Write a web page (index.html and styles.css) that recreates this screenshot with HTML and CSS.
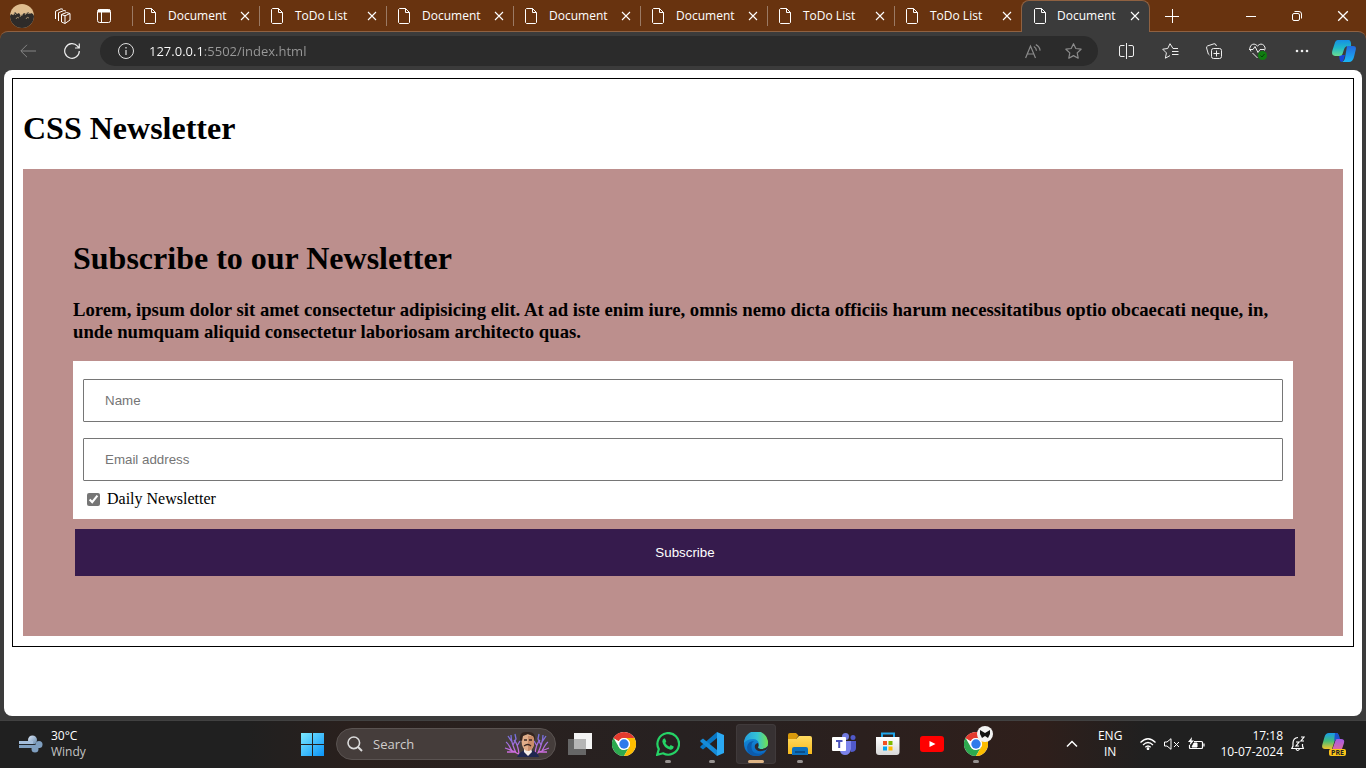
FILE: index.html
```html
<!DOCTYPE html>
<html lang="en">
<head>
<meta charset="utf-8">
<meta name="viewport" content="width=device-width, initial-scale=1">
<title>Document</title>
<link rel="stylesheet" href="styles.css">
</head>
<body>
<svg class="defs" aria-hidden="true">
  <defs>
    <symbol id="file" viewBox="0 0 12 16"><path d="M1.5.5h6l4 4v10l-1 1h-9l-1-1v-13z M7.5.5v4h4" fill="none" stroke="currentColor"/></symbol>
    <symbol id="cross" viewBox="0 0 10 10"><path d="M1 1l8 8M9 1L1 9" fill="none" stroke="currentColor" stroke-width="1.1"/></symbol>
    <symbol id="chrome" viewBox="0 0 24 24">
      <circle cx="12" cy="12" r="12" fill="#fff"/>
      <path d="M12 0a12 12 0 0 1 10.4 6H12a6 6 0 0 0-5.2 3L1.6 6A12 12 0 0 1 12 0z" fill="#e33b2e"/>
      <path d="M6.8 9L1.600 6 4 3.200l4 5z" fill="#e33b2e"/>
      <path d="M1.6 6l5.200 9A6 6 0 0 0 12 18l5.200-3-5.200 9A12 12 0 0 1 1.600 6z" fill="#2da94f"/>
      <path d="M22.4 6A12 12 0 0 1 12 24l5.2-9A6 6 0 0 0 12 6z" fill="#fdbd00"/>
      <circle cx="12" cy="12" r="6" fill="#fff"/><circle cx="12" cy="12" r="4.7" fill="#2f7bea"/>
    </symbol>
    <linearGradient id="win" x1="0" y1="0" x2="1" y2="1"><stop offset="0" stop-color="#7ceaff"/><stop offset="1" stop-color="#0a93f8"/></linearGradient>
    <linearGradient id="cpA" x1="0" y1="0" x2="0" y2="1"><stop offset="0" stop-color="#168fe4"/><stop offset=".5" stop-color="#20b9c8"/><stop offset="1" stop-color="#6bdc91"/></linearGradient>
    <linearGradient id="cpB" x1="0" y1="0" x2="0" y2="1"><stop offset="0" stop-color="#2368df"/><stop offset="1" stop-color="#19b6f4"/></linearGradient>
    <linearGradient id="pvA" x1="0" y1="0" x2="0" y2="1"><stop offset="0" stop-color="#169bea"/><stop offset=".5" stop-color="#44bd78"/><stop offset="1" stop-color="#f2c52b"/></linearGradient>
    <linearGradient id="pvB" x1="0" y1="0" x2="0" y2="1"><stop offset="0" stop-color="#a35ae8"/><stop offset="1" stop-color="#f0708a"/></linearGradient>
    <linearGradient id="edgeA" x1="0" y1="0" x2="1" y2="0"><stop offset="0" stop-color="#249ddd"/><stop offset=".55" stop-color="#34c3d4"/><stop offset="1" stop-color="#72e14f"/></linearGradient>
    <linearGradient id="edgeB" x1="0" y1="0" x2="0" y2="1"><stop offset="0" stop-color="#1993dc"/><stop offset="1" stop-color="#0867c3"/></linearGradient>
    <linearGradient id="folder" x1="0" y1="0" x2="0" y2="1"><stop offset="0" stop-color="#ffdb62"/><stop offset="1" stop-color="#f7b91c"/></linearGradient>
    <linearGradient id="cloud" x1="0" y1="0" x2="1" y2="1"><stop offset="0" stop-color="#dce8f8"/><stop offset="1" stop-color="#6689ac"/></linearGradient>
    <linearGradient id="coral" x1="0" y1="0" x2="0" y2="1"><stop offset="0" stop-color="#6a70dc"/><stop offset="1" stop-color="#e16cdc"/></linearGradient>
    <linearGradient id="bag" x1="0" y1="0" x2="0" y2="1"><stop offset="0" stop-color="#fff"/><stop offset="1" stop-color="#d8d8d8"/></linearGradient>
  </defs>
</svg>

<div class="browser">
  <header class="tabbar">
    <div class="tabbar-tools">
      <button class="icon-btn" aria-label="Profile"><svg width="24" height="24" viewBox="0 0 24 24"><circle cx="12" cy="12" r="12" fill="#dfbd8f"/><path d="M0 12l1-2 2 1 2-3 2 2 2-1 2 3 3-3 2 1 2-2 2 2 1-1 2 1 1 2a12 12 0 0 1-24 0z" fill="#2e2b29"/><path d="M3 11q2-3 3 0M10 13q1-4 3-2M15 11q2-4 4-1M6 15q1-3 3-1M16 15q1-3 3-1" fill="none" stroke="#b9a27f" stroke-width=".8"/></svg></button>
      <button class="icon-btn" aria-label="Workspaces"><svg width="17" height="17" viewBox="0 0 17 17" fill="none" stroke="currentColor" stroke-linejoin="round"><path d="M7.500 6.500l3.500 1.300 5-2.300v6.500l-5 3.500-3.500-1.500zM11 7.800v7.500M7.500 6.500l5-2 3.500 1M4.500 13V4.700L10 2.500l2 .6M1.500 11V3.200L7 .8l2 .5"/></svg></button>
      <button class="icon-btn" aria-label="Tab actions"><svg width="14" height="14" viewBox="0 0 14 14" fill="none" stroke="currentColor"><rect x=".5" y=".5" width="13" height="13" rx="2"/><path d="M1 2h12" stroke-width="3"/><path d="M4.500 3v10"/></svg></button>
    </div>
    <div class="tabs" role="tablist">
      <div class="tab" role="tab"><svg class="file"><use href="#file"/></svg><span>Document</span><button class="close" aria-label="Close tab"><svg><use href="#cross"/></svg></button></div>
      <div class="tab" role="tab"><svg class="file"><use href="#file"/></svg><span>ToDo List</span><button class="close" aria-label="Close tab"><svg><use href="#cross"/></svg></button></div>
      <div class="tab" role="tab"><svg class="file"><use href="#file"/></svg><span>Document</span><button class="close" aria-label="Close tab"><svg><use href="#cross"/></svg></button></div>
      <div class="tab" role="tab"><svg class="file"><use href="#file"/></svg><span>Document</span><button class="close" aria-label="Close tab"><svg><use href="#cross"/></svg></button></div>
      <div class="tab" role="tab"><svg class="file"><use href="#file"/></svg><span>Document</span><button class="close" aria-label="Close tab"><svg><use href="#cross"/></svg></button></div>
      <div class="tab" role="tab"><svg class="file"><use href="#file"/></svg><span>ToDo List</span><button class="close" aria-label="Close tab"><svg><use href="#cross"/></svg></button></div>
      <div class="tab" role="tab"><svg class="file"><use href="#file"/></svg><span>ToDo List</span><button class="close" aria-label="Close tab"><svg><use href="#cross"/></svg></button></div>
      <div class="tab tab-active" role="tab" aria-selected="true"><svg class="file"><use href="#file"/></svg><span>Document</span><button class="close" aria-label="Close tab"><svg><use href="#cross"/></svg></button></div>
    </div>
    <div class="window-tools">
      <button class="new-tab" aria-label="New tab"><svg width="14" height="14" viewBox="0 0 14 14"><path d="M7.500 0v14M0 7.500h14" stroke="currentColor"/></svg></button>
      <button class="win-btn" aria-label="Minimize"><svg width="10" height="10" viewBox="0 0 10 10"><path d="M0 5.500h10" stroke="currentColor"/></svg></button>
      <button class="win-btn" aria-label="Restore"><svg width="10" height="10" viewBox="0 0 10 10" fill="none" stroke="currentColor"><rect x=".5" y="2.500" width="7" height="7" rx="1.500"/><path d="M2.500.5H7A2.500 2.500 0 0 1 9.500 3v4.500"/></svg></button>
      <button class="win-btn" aria-label="Close"><svg width="12" height="12" viewBox="0 0 10 10"><use href="#cross"/></svg></button>
    </div>
  </header>

  <nav class="toolbar">
    <button class="nav-btn dim" aria-label="Back"><svg width="16" height="14" viewBox="0 0 16 14" fill="none" stroke="currentColor"><path d="M16 7H1M7 .8L.8 7 7 13.200"/></svg></button>
    <button class="nav-btn" aria-label="Refresh"><svg width="16" height="16" viewBox="0 0 16 16" fill="none" stroke="currentColor" stroke-width="1.200"><path d="M15.300 8A7.300 7.300 0 1 1 13.500 3.200L15 5M15.300.5V5H11"/></svg></button>
    <div class="address">
      <svg width="16" height="16" viewBox="0 0 16 16" fill="none" stroke="#e0e0e0"><circle cx="8" cy="8" r="7.500"/><path d="M8 7v5M8 4v1.500" stroke-width="1.200"/></svg>
      <input class="url" type="text" aria-label="Address" value="127.0.0.1:5502/index.html">
      <button class="addr-btn" aria-label="Read aloud"><svg width="16" height="15" viewBox="0 0 16 15" fill="none" stroke="currentColor" stroke-width="1.200"><path d="M.6 14L5.500 2l5 12M2.300 10h6.500M8.800 2.500q2.500 1.300 2.700 4.200M10.800.6q4 2 4.300 6"/></svg></button>
      <button class="addr-btn" aria-label="Add to favorites"><svg width="17" height="16" viewBox="0 0 17 16" fill="none" stroke="currentColor" stroke-width="1.200" stroke-linejoin="round"><path d="M8.500.7l2.300 4.800 5.300.7-3.900 3.700 1 5.300-4.700-2.600-4.700 2.600 1-5.300L.9 6.200l5.300-.7z"/></svg></button>
    </div>
    <div class="actions">
      <button class="act-btn" aria-label="Split screen"><svg width="15" height="16" viewBox="0 0 15 16" fill="none" stroke="currentColor"><path d="M5.500 2.500H2A1.500 1.500 0 0 0 .5 4v8A1.500 1.500 0 0 0 2 13.500h3.500M9.500 2.500H13A1.500 1.500 0 0 1 14.500 4v8a1.500 1.500 0 0 1-1.500 1.500H9.500M7.500 0v16"/></svg></button>
      <button class="act-btn" aria-label="Favorites"><svg width="17" height="16" viewBox="0 0 17 16" fill="none" stroke="currentColor" stroke-linejoin="round"><path d="M16 5.500h-5L8 .7 5.700 5.500.7 6.200l3.700 3.700-1 5.300L8 12.600M10 8.500h6.500M10 11.500h6.500"/></svg></button>
      <button class="act-btn" aria-label="Collections"><svg width="16" height="16" viewBox="0 0 16 16" fill="none" stroke="currentColor"><rect x="5.500" y="5.500" width="10" height="10" rx="2"/><path d="M10.500 7.500v6M7.500 10.500h6M3.500 12L2.300 11 .6 5Q.3 3.500 1.600 2.900L8 .8Q9.500.4 10 2l.4 1"/></svg></button>
      <button class="act-btn" aria-label="Browser essentials"><svg width="18" height="17" viewBox="0 0 18 17" fill="none" stroke="currentColor"><path d="M2 8.500Q-.5 5.500 1.700 2.700 5-.7 8.500 3 12-.7 15.200 2.700 17 5 15.500 7.500M0 6.500h4l2-3 3 6 2-3h4M3.500 10l5 5"/><circle cx="13.500" cy="12.500" r="4.500" fill="#107c10" stroke="none"/><path d="M11.500 12.500l1.500 1.500 2.500-3" stroke="#063d08"/></svg></button>
      <button class="act-btn" aria-label="Settings and more"><svg width="14" height="4" viewBox="0 0 14 4" fill="currentColor"><circle cx="2" cy="2" r="1.300"/><circle cx="7" cy="2" r="1.300"/><circle cx="12" cy="2" r="1.300"/></svg></button>
      <button class="act-btn" aria-label="Copilot"><svg width="24" height="22" viewBox="0 0 24 22"><path d="M15 6h6q3.500 0 2.800 3.500L22 17q-1.300 5-5 5H9q3 0 4-4z" fill="url(#cpB)"/><path d="M7 15h6l-1.500 5Q11 22 9 22 7.500 21 7 15z" fill="#1644d8"/><path d="M6 0h11q2.500 1 2 6h-3q-3 0-4 3.500L10.500 14Q10 16 7 16H3q-4-.5-2.600-5.500L2.500 4Q3.500 0 6 0z" fill="url(#cpA)"/></svg></button>
    </div>
  </nav>

  <main class="viewport">
    <div class="container">
      <h1>CSS Newsletter</h1>
      <form class="newsletter">
        <h1>Subscribe to our Newsletter</h1>
        <h3>Lorem, ipsum dolor sit amet consectetur adipisicing elit. At ad iste enim iure, omnis nemo dicta officiis harum necessitatibus optio obcaecati neque, in, unde numquam aliquid consectetur laboriosam architecto quas.</h3>
        <div class="fields">
          <input class="field" type="text" placeholder="Name" aria-label="Name">
          <input class="field" type="email" placeholder="Email address" aria-label="Email address">
          <label class="daily"><input type="checkbox" checked>Daily Newsletter</label>
        </div>
        <button class="subscribe" type="button">Subscribe</button>
      </form>
    </div>
  </main>
</div>

<footer class="taskbar">
  <button class="weather">
    <svg width="24" height="18" viewBox="0 0 24 18"><circle cx="13.500" cy="5" r="4.500" fill="url(#cloud)"/><circle cx="20" cy="9.500" r="3.500" fill="#7f9fc0"/><circle cx="16" cy="14" r="3.500" fill="#7f9fc0"/><path d="M0 6h14v3H0z" fill="#a4bedb"/><path d="M0 10h21v3H0z" fill="#7f9fc0"/><path d="M0 9.500h15" stroke="#20262c"/></svg>
    <span class="weather-text"><span>30°C</span><span class="muted">Windy</span></span>
  </button>
  <div class="apps">
    <button class="app" aria-label="Start"><svg width="23" height="23" viewBox="0 0 23 23"><path d="M0 0h11v11H0zM12 0h11v11H12zM0 12h11v11H0zM12 12h11v11H12z" fill="url(#win)"/></svg></button>
    <label class="search">
      <svg width="16" height="16" viewBox="0 0 16 16" fill="none" stroke="#dcdcdc" stroke-width="1.600"><circle cx="6.800" cy="6.800" r="5.800"/><path d="M11 11l4 4" stroke-width="2"/></svg>
      <input type="text" placeholder="Search" aria-label="Search">
      <svg width="46" height="26" viewBox="0 0 46 26" fill="none"><path d="M18 25Q10 20 1 17M8 20Q4 12 2 11M12 22Q7 11 7 4M8 11L4 5M9 14l3-6-1-5M15 23Q14 13 10 9M13 15l3-5M28 25q8-5 17-8M38 20q4-8 6-9M34 22q5-11 5-18M38 11l4-6M37 14l-3-6 1-5M31 23q1-10 5-14M33 15l-3-5M3 21l8 0M43 21h-8" stroke="url(#coral)" stroke-width="1.300"/><path d="M13 26q2-5 8-7h6q7 2 8 7z" fill="#1f2750"/><path d="M20 17h7l1 4-4 4-4-4z" fill="#f4ece6"/><path d="M17 6q6-6 13 0v8q-2 6-6 6t-6-6z" fill="#e0ad89"/><path d="M24 5h6v9q-2 5-6 6z" fill="#c98c69"/><path d="M16 9Q15 0 23 1q9-1 8 8l-2-4-5-2-5 2-1 5z" fill="#33251f"/><path d="M20 9h3M25 9h3M20 15q4-3 7 0" stroke="#382620" stroke-width="1.300"/></svg>
    </label>
    <button class="app" aria-label="Task view"><svg width="24" height="22" viewBox="0 0 24 22"><path d="M6 0h18v16H6z" fill="#f4f4f4"/><path d="M0 6h18v16H0z" fill="#666"/><path d="M6 6h12v10H6z" fill="#b5b5b5"/></svg></button>
    <button class="app" aria-label="Chrome"><svg width="24" height="24"><use href="#chrome"/></svg></button>
    <button class="app running" aria-label="WhatsApp"><svg width="24" height="24" viewBox="0 0 24 24"><path d="M1.200 22.800l1.600-5.700A10.800 10.800 0 1 1 7 21.300z" fill="none" stroke="#25d366" stroke-width="2.200"/><path d="M8 6.500l1 0 1.300 3-1 1.500q1.300 2.500 4 3.700l1.400-1.600 3 1.400q0 3-3.300 3.300Q7.500 16 6.300 9.500q.2-2.300 1.700-3z" fill="#25d366"/></svg></button>
    <button class="app running" aria-label="Visual Studio Code"><svg width="24" height="24" viewBox="0 0 24 24"><path d="M17 6L3 17.500.3 15.500v-1L17 0z" fill="#0877c5"/><path d="M17 18L3 6.500.3 8.500v1L17 24z" fill="#168bd8"/><path d="M17 0l7 3v18l-7 3z" fill="#2ba9f3"/></svg></button>
    <button class="app running current" aria-label="Edge"><svg width="24" height="24" viewBox="0 0 24 24"><circle cx="12" cy="12" r="12" fill="url(#edgeB)"/><path d="M0 11A12 12 0 0 1 24 11q0 6-6 6-4 0-4-2 1-1 1-3-1-5-6-5Q3 7 0 11z" fill="url(#edgeA)"/><path d="M8 11q-2 7 3 10 4 2 10-1-4 5-10 4-8-1-8-9 1-6 7-6z" fill="#0c5bab"/><path d="M14 11q-4 1-3 5 2 5 11 2l2-3v-1q-3 3-6 3-4 0-4-2 1-1 0-4z" fill="#302b2d"/></svg></button>
    <button class="app running" aria-label="File Explorer"><svg width="24" height="22" viewBox="0 0 24 22"><path d="M0 2q0-2 2-2h6l2.500 2.500L8 6H0z" fill="#d99a0c"/><path d="M0 6h8l3-3h11q2 0 2 2v16H0z" fill="url(#folder)"/><path d="M4 22v-6q0-2 2-2h12q2 0 2 2v6z" fill="#0c70bd"/><path d="M7 18h10v2H7z" fill="#0b4d87"/></svg></button>
    <button class="app" aria-label="Teams"><svg width="24" height="22" viewBox="0 0 24 22"><circle cx="13.500" cy="3.500" r="3.500" fill="#7179df"/><circle cx="21" cy="4.500" r="2.500" fill="#5059c9"/><path d="M16 8h8v7q0 4-5 4z" fill="#5059c9"/><path d="M9 8h10v8q-1 6-6 6-4 0-5-4z" fill="#7b83eb"/><rect y="4" width="14" height="14" rx="1" fill="#fff"/><path d="M4 8h6.500M7.200 8v7" stroke="#4b53bc" stroke-width="2"/></svg></button>
    <button class="app" aria-label="Microsoft Store"><svg width="24" height="24" viewBox="0 0 24 24"><path d="M6 6V1.500h12V6" fill="none" stroke="#20a6ea" stroke-width="2"/><path d="M0 5h23.500v15q0 3-3 3H3q-3 0-3-3z" fill="url(#bag)"/><path d="M7 9h4v4H7z" fill="#f25022"/><path d="M12.500 9h4v4h-4z" fill="#7fba00"/><path d="M7 14.500h4v4H7z" fill="#00a4ef"/><path d="M12.500 14.500h4v4h-4z" fill="#ffb900"/></svg></button>
    <button class="app" aria-label="YouTube"><svg width="24" height="16" viewBox="0 0 24 16"><rect width="24" height="16" rx="3" fill="#f00"/><path d="M9.500 5l6 3-6 3z" fill="#fff"/></svg></button>
    <button class="app running" aria-label="Chrome profile"><svg width="24" height="24"><use href="#chrome"/></svg><svg class="badge" width="16" height="16" viewBox="0 0 16 16"><circle cx="8" cy="8" r="8" fill="#f2f2f2"/><path d="M3 4l5 3 5-3v4l-2 4-3-2-3 2-2-4z" fill="#111"/></svg></button>
  </div>
  <div class="tray">
    <button class="tray-btn chevron" aria-label="Show hidden icons"><svg width="12" height="8" viewBox="0 0 12 8"><path d="M1 6.500l5-5 5 5" fill="none" stroke="currentColor" stroke-width="1.500"/></svg></button>
    <button class="tray-btn lang"><span>ENG</span><span>IN</span></button>
    <button class="tray-btn status" aria-label="Network, volume, battery">
      <svg width="16" height="12" viewBox="0 0 16 12" fill="none" stroke="currentColor" stroke-width="1.200"><path d="M.5 4.500q7.500-7.500 15 0M3 7q5-5 10 0M5.300 9.300q2.700-2.600 5.400 0"/><circle cx="8" cy="10.700" r=".8" fill="currentColor"/></svg>
      <svg width="16" height="12" viewBox="0 0 16 12" fill="none" stroke="currentColor"><path d="M.5 4H3l4-3.300v10.600L3 8H.5zM10 4l5 5M15 4l-5 5"/></svg>
      <svg width="17" height="14" viewBox="0 0 17 14" fill="none" stroke="currentColor"><path d="M6 4.500h7.500q1 0 1 1v5q0 1-1 1h-11q-1 0-1-1V8M16 6.500v3" stroke-width="1.200"/><path d="M6 6h3v4H4z" fill="currentColor"/><path d="M4 0L0 5h2.500L1.500 8.500 6 3.500H3.500z" fill="currentColor" stroke="none"/></svg>
    </button>
    <button class="tray-btn clock"><span>17:18</span><span>10-07-2024</span></button>
    <button class="tray-btn" aria-label="Notifications"><svg width="14" height="16" viewBox="0 0 14 16" fill="none" stroke="currentColor" stroke-width="1.200"><path d="M7 1.500Q2 2 2 7v3L.8 12.500h11.500L11.500 10V8M5 13q1.500 3 3.500 0M5 6h3L5 10h3M10 1h3l-3 4h3"/></svg></button>
    <button class="tray-btn preview" aria-label="Copilot preview"><svg width="24" height="22" viewBox="0 0 24 22"><path d="M14 6h5q4 0 3 4l-2 6q-1 4-5 4H9z" fill="url(#pvB)"/><path d="M7 0h8q2 1 2 6h-2q-2 0-3 4l-2 6H3q-4 0-2.500-5l2-7Q3.500 0 7 0z" fill="url(#pvA)"/><path d="M13 0h2q2 1 3 6h-3q-2 0-3 3z" fill="#1c52cc"/></svg><span class="pre">PRE</span></button>
  </div>
</footer>
</body>
</html>
```
FILE: styles.css
```css
:root {
  --ui: "Open Sans", "Noto Sans", sans-serif;
  --brown: #68330f;
  --edge: #8f6141;
  --chrome: #3b3b3b;
}

* { box-sizing: border-box; }

body {
  margin: 0;
  min-height: 100vh;
  display: flex;
  flex-direction: column;
  background: var(--chrome);
  font-family: "Liberation Serif", serif;
}

button {
  border: 0;
  padding: 0;
  background: none;
  color: inherit;
}

svg { display: block; flex: none; }
.defs { width: 0; height: 0; position: absolute; }

.browser {
  flex: 1;
  display: flex;
  flex-direction: column;
  background: linear-gradient(var(--brown) 44px, var(--chrome) 44px);
}

/* Tab strip */
.tabbar {
  position: relative;
  z-index: 1;
  display: flex;
  height: 32px;
  margin-bottom: -1px;
  color: #fff;
  font: 12px/16px var(--ui);
}

.tabbar-tools {
  display: flex;
  align-items: center;
  gap: 16px;
  width: 132px;
  padding-left: 10px;
}
.icon-btn { display: grid; place-items: center; width: 24px; }
.icon-btn:nth-child(3) { margin-left: 2px; }

.tabs { flex: 1; display: flex; }

.tab {
  flex: 1;
  display: flex;
  align-items: center;
  padding: 0 8px 0 12px;
  background: linear-gradient(#9b7a64, #9b7a64) 0 6px / 1px 20px no-repeat;
}
.tab span { flex: 1; padding-left: 12px; }
.file { width: 12px; height: 16px; }
.close { width: 12px; height: 16px; display: grid; place-items: center; }
.close svg { width: 10px; height: 10px; }

.tab-active {
  padding-bottom: 1px;
  background: var(--chrome);
  border: 1px solid var(--edge);
  border-bottom: 0;
  border-radius: 8px 8px 0 0;
}
.tab-active span { padding-left: 11px; }

.window-tools { display: flex; width: 216px; }
.new-tab { width: 44px; margin-right: 34px; display: grid; place-items: center; }
.win-btn { width: 46px; display: grid; place-items: center; }

/* Toolbar */
.toolbar {
  display: flex;
  align-items: center;
  height: 39px;
  padding-left: 6px;
  border-top: 1px solid var(--edge);
  border-radius: 8px 8px 0 0;
  background: var(--chrome);
  color: #eee;
}
.nav-btn { width: 44px; display: grid; place-items: center; }
.dim { color: #858585; }

.address {
  flex: 1;
  display: flex;
  align-items: center;
  height: 30px;
  margin-left: 6px;
  padding: 0 5px 0 18px;
  border-radius: 15px;
  background: #2b2b2b;
}
.url {
  flex: 1;
  min-width: 0;
  margin-left: 15px;
  padding: 0;
  border: 0;
  font: 13px/20px var(--ui);
  color: transparent;
  background: linear-gradient(90deg, #fff 54px, #9a9a9a 54px);
  background-clip: text;
  -webkit-background-clip: text;
}
.addr-btn { width: 40px; display: grid; place-items: center; color: #8b8b8b; }

.actions { display: flex; padding-left: 6px; }
.act-btn { width: 44px; display: grid; place-items: center; }
.act-btn:last-child { width: 40px; margin-right: 2px; }

/* Page */
.viewport {
  flex: 1;
  margin: 0 4px 4px;
  padding: 8px;
  border-radius: 8px;
  background: #fff;
}

.container {
  padding: 10px;
  border: 1px solid #000;
  display: flow-root;
}

.newsletter {
  padding: 50px;
  background: #bc8f8d;
  display: flow-root;
}
h1 { line-height: 37px; }
h3 { line-height: 22px; }

.fields {
  padding: 10px;
  background: #fff;
  display: flow-root;
}
.field {
  display: block;
  width: 100%;
  height: 43px;
  margin: 8px 0 16px;
  padding: 12px 21px;
  border: 1px solid #767676;
  border-radius: 1px;
  font-family: "Liberation Sans", Arial, sans-serif;
}
.field + .field { margin: 0 0 8px; }
.field::placeholder { color: #757575; }

.daily {
  display: flex;
  align-items: center;
  gap: 7px;
  height: 20px;
  padding-left: 4px;
  font-size: 16px;
}
.daily input { margin: 0; accent-color: #767676; }

.subscribe {
  width: 100%;
  height: 47px;
  margin: 10px 2px;
  display: block;
  background: #361b4d;
  color: #fff;
  font-family: "Liberation Sans", Arial, sans-serif;
}

/* Taskbar */
.taskbar {
  display: grid;
  grid-template-columns: 292px auto 1fr;
  height: 48px;
  box-shadow: inset 0 1px #414141;
  background: linear-gradient(90deg, #202020 18%, #2a201d 26%, #272121 50%, #2f1f1b 76%, #202020 84%);
  color: #fff;
  font: 12px/16px var(--ui);
}
.taskbar button { font: inherit; }

.weather {
  display: flex;
  align-items: center;
  gap: 8px;
  padding-left: 19px;
  text-align: left;
}
.weather-text { display: flex; flex-direction: column; }
.muted { color: #c4c4c4; }

.apps { display: flex; align-items: center; gap: 4px; }
.app {
  position: relative;
  width: 40px;
  height: 40px;
  display: grid;
  place-items: center;
  border-radius: 4px;
}
.running::after {
  content: "";
  position: absolute;
  bottom: 1px;
  left: 17px;
  width: 6px;
  height: 3px;
  border-radius: 2px;
  background: #969190;
}
.current { background: #373132; box-shadow: 0 0 0 1px #403a3b inset; }
.current::after { left: 12px; width: 16px; background: #dfb586; }
.badge { position: absolute; top: 2px; right: 3px; }

.search {
  display: flex;
  align-items: center;
  gap: 10px;
  width: 220px;
  height: 32px;
  padding: 0 5px 0 10px;
  border: 1px solid #5a5351;
  border-radius: 16px;
  background: #453d3b;
}
.search input {
  flex: 1;
  min-width: 0;
  padding: 0;
  border: 0;
  background: none;
  font: 13px/20px var(--ui);
}
.search input::placeholder { color: #d0cdcc; }

.tray {
  display: flex;
  align-items: center;
  justify-content: flex-end;
  padding-right: 20px;
}
.tray-btn { display: flex; align-items: center; }
.chevron { margin-right: 20px; }
.lang { flex-direction: column; margin-right: 18px; }
.status { gap: 8px; margin-right: 15px; }
.tray .clock { flex-direction: column; align-items: flex-end; margin-right: 8px; }
.preview { position: relative; margin-left: 17px; }
.pre {
  position: absolute;
  right: 0;
  bottom: -1px;
  padding: 0 2px;
  border-radius: 2px;
  background: #fcc419;
  color: #222;
  font: bold 7px/7px var(--ui);
}
```
